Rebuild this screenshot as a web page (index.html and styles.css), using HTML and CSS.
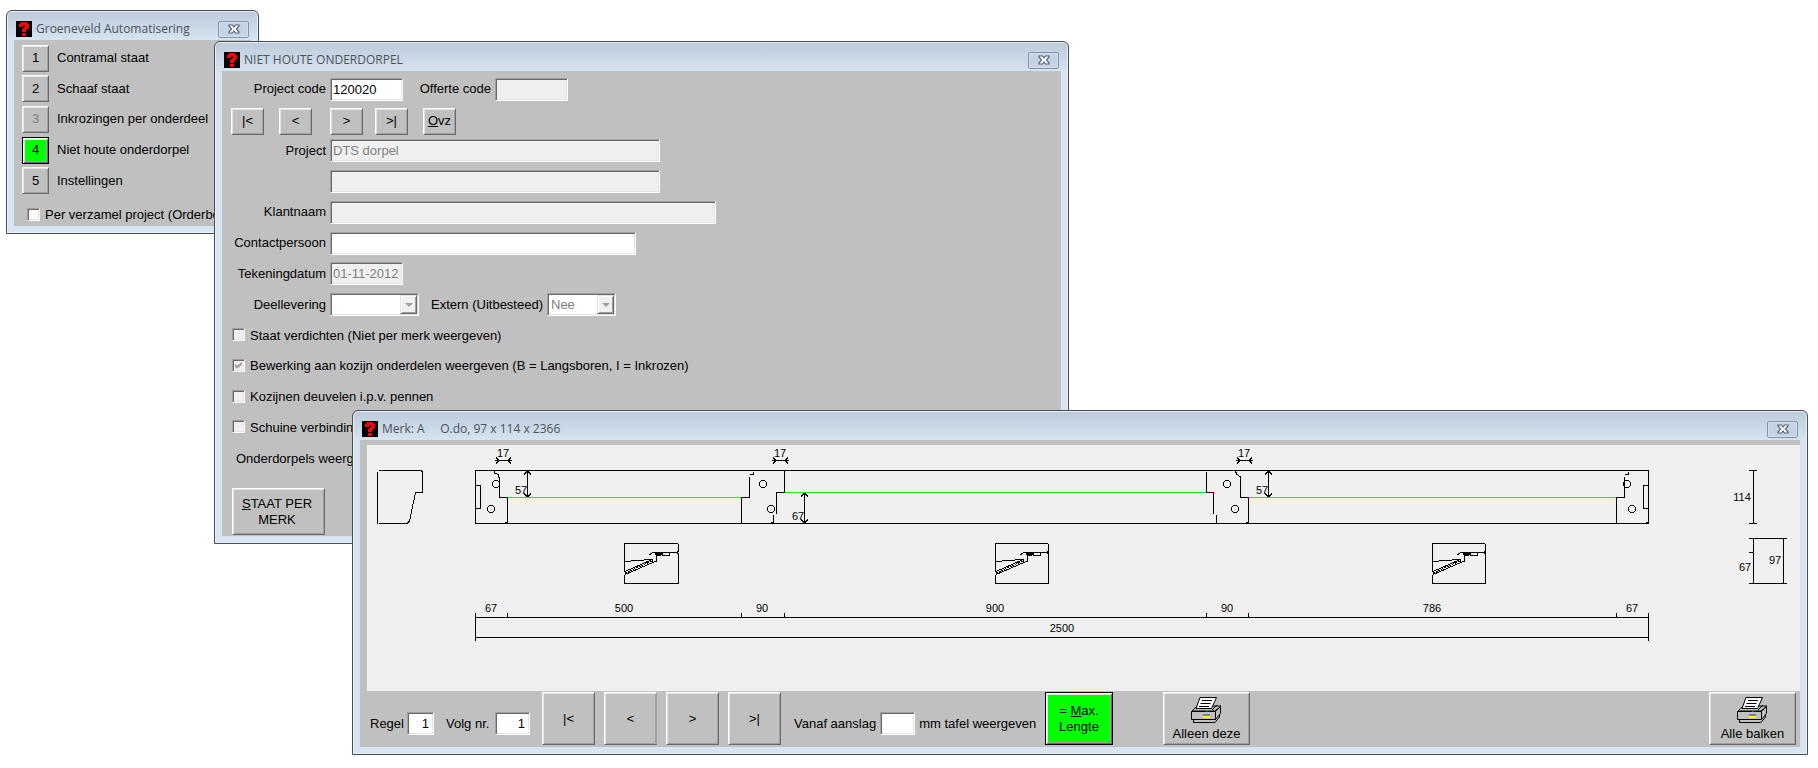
FILE: index.html
```html
<!DOCTYPE html>
<html lang="nl">
<head>
<meta charset="utf-8">
<title>Groeneveld Automatisering</title>
<link rel="stylesheet" href="styles.css">
</head>
<body>
<svg class="defs" width="0" height="0" aria-hidden="true">
  <symbol id="app-icon" viewBox="0 0 16 16">
    <rect width="16" height="16" fill="#000"/>
    <path d="M3 3h1V2h1V1h6v1h1v1h1v4h-1v1h-1v1h-1v2H6V8h1V7h1V6h1V4H7v2H3zM6 12h4v3H6z" fill="#f00"/>
  </symbol>
  <symbol id="close-icon" viewBox="0 0 12 10">
    <path d="M1 1H4.500L6 3L7.500 1H11V2L8.500 5L11 8V9H7.500L6 7L4.500 9H1V8L3.500 5L1 2Z" fill="#fff" stroke="#5a6274" stroke-width="1.200"/>
  </symbol>
  <symbol id="printer" viewBox="0 0 31 27">
    <path d="M5 10L1 14H24L30 9H23Z" fill="#c0c0c0" stroke="#000"/>
    <path d="M2.500 22V25.500H24L28.500 20V17" fill="#c0c0c0" stroke="#000"/>
    <path d="M.5 14.500H24.500V22.500H.5Z" fill="#c0c0c0" stroke="#000"/>
    <path d="M24.500 14.500L29.500 9.500V16.500L24.500 22.500Z" fill="#c0c0c0" stroke="#000"/>
    <path d="M21 13L26 8" stroke="#000" fill="none"/>
    <path d="M9 .5H25.500L20.500 11.500H5Z" fill="#fff" stroke="#000"/>
    <path d="M11 3.500H21M9.500 6.500H19.500M8 9.500H18" stroke="#000" stroke-width="1.200"/>
    <rect x="12" y="17" width="7" height="2" fill="#808080"/>
    <rect x="12" y="19" width="7" height="2" fill="#ff0"/>
    <path d="M15 14.500L18 13" stroke="#0c0" fill="none"/>
  </symbol>
  <symbol id="drop" viewBox="0 0 8 4"><path d="M0 0H8L4 4Z" fill="#a0a0a0"/></symbol>
</svg>

<section class="window menu-window">
  <header class="titlebar">
    <svg class="app-icon"><use href="#app-icon"/></svg>
    <h2 class="title">Groeneveld Automatisering</h2>
    <button class="close" type="button" aria-label="Sluiten"><svg><use href="#close-icon"/></svg></button>
  </header>
  <div class="client">
    <div class="menu-list">
      <div class="menu-row"><button class="btn num" id="m1">1</button><label for="m1">Contramal staat</label></div>
      <div class="menu-row"><button class="btn num" id="m2">2</button><label for="m2">Schaaf staat</label></div>
      <div class="menu-row"><button class="btn num" id="m3" disabled>3</button><label for="m3">Inkrozingen per onderdeel</label></div>
      <div class="menu-row"><button class="btn num active" id="m4">4</button><label for="m4">Niet houte onderdorpel</label></div>
      <div class="menu-row"><button class="btn num" id="m5">5</button><label for="m5">Instellingen</label></div>
    </div>
    <label class="menu-check"><input type="checkbox" class="check">Per verzamel project (Orderboek)</label>
  </div>
</section>

<section class="window form-window">
  <header class="titlebar">
    <svg class="app-icon"><use href="#app-icon"/></svg>
    <h2 class="title">NIET HOUTE ONDERDORPEL</h2>
    <button class="close" type="button" aria-label="Sluiten"><svg><use href="#close-icon"/></svg></button>
  </header>
  <form class="client form">
    <div class="rows">
      <div class="row">
        <label class="caption" for="code">Project code</label><input class="field w-code" id="code" value="120020">
        <label class="second" for="offerte">Offerte code</label><input class="field w-code" id="offerte" disabled>
      </div>
      <div class="row nav">
        <span class="pair"><button type="button" class="btn">|&lt;</button><button type="button" class="btn">&lt;</button></span>
        <span class="pair near"><button type="button" class="btn">&gt;</button><button type="button" class="btn">&gt;|</button></span>
        <button type="button" class="btn"><u>O</u>vz</button>
      </div>
      <div class="row"><label class="caption" for="project">Project</label><input class="field w-project" id="project" value="DTS dorpel" disabled></div>
      <div class="row"><span class="caption"></span><input class="field w-project" aria-label="Project, regel 2" disabled></div>
      <div class="row"><label class="caption" for="klant">Klantnaam</label><input class="field w-client" id="klant" disabled></div>
      <div class="row"><label class="caption" for="contact">Contactpersoon</label><input class="field w-contact" id="contact"></div>
      <div class="row"><label class="caption" for="datum">Tekeningdatum</label><input class="field w-code" id="datum" value="01-11-2012" disabled></div>
      <div class="row">
        <label class="caption" for="deel">Deellevering</label>
        <span class="combo w-deel"><select id="deel" disabled><option></option></select><span class="arrow"><svg><use href="#drop"/></svg></span></span>
        <label class="second combo-label" for="extern">Extern (Uitbesteed)</label>
        <span class="combo w-extern"><select id="extern" disabled><option>Nee</option></select><span class="arrow"><svg><use href="#drop"/></svg></span></span>
      </div>
      <label class="row tick"><input type="checkbox" class="check" disabled>Staat verdichten (Niet per merk weergeven)</label>
      <label class="row tick"><input type="checkbox" class="check" checked disabled>Bewerking aan kozijn onderdelen weergeven (B = Langsboren, I = Inkrozen)</label>
      <label class="row tick"><input type="checkbox" class="check" disabled>Kozijnen deuvelen i.p.v. pennen</label>
      <label class="row tick"><input type="checkbox" class="check" disabled>Schuine verbinding</label>
      <div class="row note">Onderdorpels weergeven</div>
    </div>
    <button type="button" class="btn staat"><span><u>S</u>TAAT PER<br>MERK</span></button>
  </form>
</section>

<section class="window drawing-window">
  <header class="titlebar">
    <svg class="app-icon"><use href="#app-icon"/></svg>
    <h2 class="title">Merk: A     O.do, 97 x 114 x 2366</h2>
    <button class="close" type="button" aria-label="Sluiten"><svg><use href="#close-icon"/></svg></button>
  </header>
  <div class="client drawing">
    <svg class="canvas" viewBox="0 0 1433 246" role="img" aria-label="Tekening onderdorpel">
      <defs>
        <g id="gap17"><path d="M0 15.500H17M1 12.500L4 15.500L1 18.500M16 12.500L13 15.500L16 18.500"/></g>
        <g id="hole"><path d="M-1.500 -3.500H1.500L3.500 -1.500V1.500L1.500 3.500H-1.500L-3.500 1.500V-1.500Z"/></g>
        <g id="glass">
          <path d="M9 9.500H34M5 12L9 9.500M12.500 10V18M10 18.500H13M-20 18.500H-13M-13 17.500H0M0 16.500H8V19M-19 28.500L7 17M-19 31.500L10 19"/>
          <path d="M-19 30L8 18" stroke-dasharray="2 1"/>
          <path d="M11 10H19V12H17V13H13V12H11Z" fill="#000" stroke="none"/>
          <path d="M18.500 9.500H25.500V12.500H18.500Z"/>
        </g>
      </defs>
      <g class="ink">
        <path d="M10.500 27V79M12 25.500H54L55.500 27V47.500H48.500L42.500 76L40 78.500H12"/>
        <path d="M108.500 25.500H1281.500V78.500H108.500Z"/>
        <path d="M108.500 40.500H113.500V63.500H108.500M1281.500 40.500H1276.500V63.500H1281.500"/>
        <path d="M127.500 26V28L131 29.500V32H132.500V52.500H140.500V78M138 77.500H140"/>
        <path d="M386.500 27V29.500H383M382.500 32V52.500H374.500V78"/>
        <path d="M417.500 26V47.500H409.500V69M406.500 70V78M404 77.500H406"/>
        <path d="M839.500 27V47.500H846.500V69M849.500 70V78"/>
        <path d="M868.500 26L869.500 29L872 31L873.500 32V52.500H881.500V78M879 77.500H881"/>
        <path d="M1261.500 27V29.500H1258M1257.500 32V52.500H1249.500V78M1279 77.500H1281"/>
        <use href="#hole" x="129" y="39"/><use href="#hole" x="124" y="64"/>
        <use href="#hole" x="396" y="39"/><use href="#hole" x="404" y="64"/>
        <use href="#hole" x="860" y="39"/><use href="#hole" x="868" y="64"/>
        <use href="#hole" x="1260" y="39"/><use href="#hole" x="1265" y="64"/>
        <use href="#gap17" x="128"/><use href="#gap17" x="405"/><use href="#gap17" x="869"/>
        <path d="M160.500 26V52M157 29.500L160.500 26L164 29.500M157 48.500L160.500 52L164 48.500"/>
        <path d="M901.500 26V52M898 29.500L901.500 26L905 29.500M898 48.500L901.500 52L905 48.500"/>
        <path d="M437.500 48V78M434 51.500L437.500 48L441 51.500M434 74.500L437.500 78L441 74.500"/>
      </g>
      <path class="rebate" d="M141 52.500H374M418 47.500H839M882 52.500H1249"/>
      <g class="ink">
        <path d="M257.500 98.500H310.500L311.500 100V106L309.500 107.500L311.500 109V138.500H257.500V131L259 128.500L257.500 126Z"/>
        <path d="M628.500 98.500H680.500L681.500 100V106L679.500 107.500L681.500 109V138.500H628.500V131L630 128.500L628.500 126Z"/>
        <path d="M1065.500 98.500H1117.500L1118.500 100V106L1116.500 107.500L1118.500 109V138.500H1065.500V131L1067 128.500L1065.500 126Z"/>
        <use href="#glass" x="277" y="98"/><use href="#glass" x="648" y="98"/><use href="#glass" x="1085" y="98"/>
        <path d="M108.500 168V196M1281.500 168V196M108 172.500H1282M108 192.500H1282M140.500 168V172M374.500 168V172M417.500 168V172M839.500 168V172M881.500 168V172M1249.500 168V172"/>
        <path d="M1386.500 25V78M1382 25.500H1390M1382 78.500H1390M1382 93.500H1420M1382 138.500H1420M1386.500 93V138M1416.500 93V138M1382 107.500H1386"/>
      </g>
      <g class="dims">
        <text x="136" y="12">17</text><text x="413" y="12">17</text><text x="877" y="12">17</text>
        <text x="154" y="49">57</text><text x="895" y="49">57</text><text x="431" y="75">67</text>
        <text x="124" y="167">67</text><text x="257" y="167">500</text><text x="395" y="167">90</text>
        <text x="628" y="167">900</text><text x="860" y="167">90</text><text x="1065" y="167">786</text>
        <text x="1265" y="167">67</text><text x="695" y="187">2500</text>
        <text x="1375" y="56">114</text><text x="1378" y="126">67</text><text x="1408" y="119">97</text>
      </g>
    </svg>
    <div class="toolbar">
      <div class="numbers">
        <label for="regel">Regel</label><input class="field num-small" id="regel" value="1">
        <label for="volg">Volg nr.</label><input class="field num-mid" id="volg" value="1">
      </div>
      <div class="steps">
        <button class="btn">|&lt;</button><button class="btn soft">&lt;</button><button class="btn">&gt;</button><button class="btn">&gt;|</button>
      </div>
      <div class="offset">
        <label for="aanslag">Vanaf aanslag</label><input class="field num-mid" id="aanslag"><span>mm tafel weergeven</span>
      </div>
      <button class="btn active max"><span>= <u>M</u>ax.<br>Lengte</span></button>
      <button class="btn print"><svg><use href="#printer"/></svg>Alleen deze</button>
      <button class="btn print last"><svg><use href="#printer"/></svg>Alle balken</button>
    </div>
  </div>
</section>
</body>
</html>
```
FILE: styles.css
```css
* { box-sizing: border-box; }

body {
  margin: 0;
  min-height: 100vh;
  position: relative;
  overflow: hidden;
  background: #fff;
  color: #000;
  font: 13px/16px "Liberation Sans", Arial, sans-serif;
}

.defs { position: absolute; }

button, input, select { font: inherit; color: inherit; margin: 0; }

/* Windows */
.window {
  position: absolute;
  display: flex;
  flex-direction: column;
  padding: 0 7px 7px;
  border: 1px solid #4a4d52;
  border-radius: 6px 6px 0 0;
  background: linear-gradient(#bccad9, #d7e4f2 30px);
  box-shadow: inset 0 0 0 1px #e6eef7;
}
.menu-window { left: 6px; top: 10px; width: 253px; height: 224px; }
.form-window { left: 214px; top: 41px; width: 855px; height: 503px; }
.drawing-window { left: 352px; top: 410px; right: 10px; height: 345px; }

.titlebar {
  flex: none;
  display: flex;
  align-items: center;
  height: 29px;
  padding: 7px 2px 0;
}
.app-icon { width: 16px; height: 16px; shape-rendering: crispEdges; }
.title {
  flex: 1;
  margin: 0 0 0 4px;
  font: 12px/16px "Open Sans", "Noto Sans", sans-serif;
  color: #4b535e;
  white-space: pre;
}
.close {
  display: grid;
  place-items: center;
  width: 31px;
  height: 17px;
  padding: 0;
  border: 1px solid #8492b0;
  border-radius: 2px;
  background: #c6d3e2;
  box-shadow: inset 0 0 0 1px #d3deea;
}
.close svg { width: 12px; height: 10px; }

.client {
  flex: 1;
  min-height: 0;
  display: flex;
  flex-direction: column;
  background: #c0c0c0;
  white-space: nowrap;
  overflow: hidden;
}

/* Controls */
.btn {
  display: inline-flex;
  align-items: center;
  justify-content: center;
  padding: 0;
  border: 1px solid;
  border-color: #fff #696969 #696969 #fff;
  background: #c0c0c0;
  box-shadow: inset 1px 1px #e3e3e3, inset -1px -1px #a0a0a0;
  text-align: center;
}
.btn:disabled { color: #808080; }
.btn.soft { border-right-color: #a0a0a0; }
.btn.active {
  border-color: #000;
  background: #0f0;
  box-shadow: inset 1px 1px #fff, inset -1px -1px #696969, inset 2px 2px #e3e3e3, inset -2px -2px #a0a0a0;
}

.field, .combo {
  height: 23px;
  border: 1px solid;
  border-color: #a0a0a0 #fff #fff #a0a0a0;
  border-radius: 0;
  background: #fff;
  box-shadow: inset 1px 1px #696969, inset -1px -1px #e3e3e3;
}
.field { padding: 0 2px; }
.field:disabled { background: #f0f0f0; color: #808080; }

.combo { display: grid; grid-template-columns: 1fr 17px; padding: 1px; }
.combo select {
  grid-area: 1 / 1 / 2 / 3;
  min-width: 0;
  padding: 0 2px;
  border: 0;
  appearance: none;
  background: none;
  color: #808080;
  opacity: 1;
}
.arrow {
  grid-area: 1 / 2;
  display: grid;
  place-items: center;
  background: #f0f0f0;
  border: 1px solid;
  border-color: #e3e3e3 #696969 #696969 #e3e3e3;
  box-shadow: inset 1px 1px #fff, inset -1px -1px #a0a0a0;
  pointer-events: none;
}
.arrow svg { width: 8px; height: 4px; }

.check {
  flex: none;
  appearance: none;
  display: grid;
  place-items: center;
  width: 13px;
  height: 13px;
  margin: 0 0 2px;
  border: 1px solid;
  border-color: #a0a0a0 #fff #fff #a0a0a0;
  background: #fff;
  box-shadow: inset 1px 1px #696969, inset -1px -1px #e3e3e3;
}
.check:disabled { background: #f0f0f0; }
.check:checked::before {
  content: "";
  width: 7px;
  height: 7px;
  background: #a0a0a0;
  clip-path: polygon(0 29%, 29% 58%, 100% 0, 100% 43%, 29% 100%, 0 72%);
}

/* Menu window */
.menu-list {
  flex: 1;
  display: grid;
  grid-auto-rows: 1fr;
  padding: 3px 8px 0;
}
.menu-row { display: flex; align-items: center; gap: 8px; }
.num { width: 27px; height: 27px; }
.menu-check {
  display: flex;
  align-items: center;
  gap: 5px;
  height: 30px;
  padding: 8px 0 0 13px;
}

/* Form window */
.form { padding: 3px 0 1px; gap: 14px; }
.rows { flex: 1; min-height: 0; display: grid; grid-auto-rows: minmax(0, 1fr); }
.row { display: flex; align-items: center; gap: 4px; }
.caption { width: 104px; text-align: right; }
.second { width: 84px; text-align: right; }
.combo-label { width: 120px; }
.w-code { width: 73px; }
.w-project { width: 330px; }
.w-client { width: 386px; }
.w-contact { width: 306px; }
.w-deel { width: 89px; }
.w-extern { width: 69px; }
.nav { padding: 2px 0 0 9px; gap: 15px; }
.nav .btn { width: 33px; height: 27px; }
.pair { display: flex; gap: 15px; margin-right: 3px; }
.pair.near { gap: 12px; margin-right: 0; }
.tick { padding-left: 10px; gap: 5px; }
.note { padding-left: 14px; }
.staat { align-self: flex-start; width: 93px; height: 47px; margin-left: 10px; padding-right: 3px; }

/* Drawing window */
.drawing { padding-top: 5px; }
.canvas {
  flex: 1;
  min-height: 0;
  margin-left: 7px;
  background: #f0f0f0;
}
.ink, .rebate { fill: none; stroke: #000; stroke-width: 1px; shape-rendering: crispEdges; }
.rebate { stroke: #0f0; }
.dims { font-size: 11px; text-anchor: middle; }

.toolbar {
  flex: none;
  display: flex;
  align-items: flex-start;
  height: 56px;
  padding: 1px 4px 0 10px;
}
.numbers, .offset { display: flex; align-items: center; height: 63px; gap: 4px; }
.numbers { width: 172px; }
.numbers label { width: 33px; }
.numbers .field { text-align: right; padding-right: 4px; }
.numbers .field + label { width: 45px; margin-left: 8px; }
.num-small { width: 27px; }
.num-mid { width: 35px; }
.steps { display: flex; gap: 9px; }
.steps .btn { width: 53px; height: 53px; }
.offset { width: 264px; padding-left: 13px; }
.max { width: 68px; height: 53px; margin-right: 50px; }
.print { flex-direction: column; width: 87px; height: 53px; gap: 2px; padding-top: 2px; }
.print svg { width: 31px; height: 27px; }
.last { margin-left: auto; }
```
